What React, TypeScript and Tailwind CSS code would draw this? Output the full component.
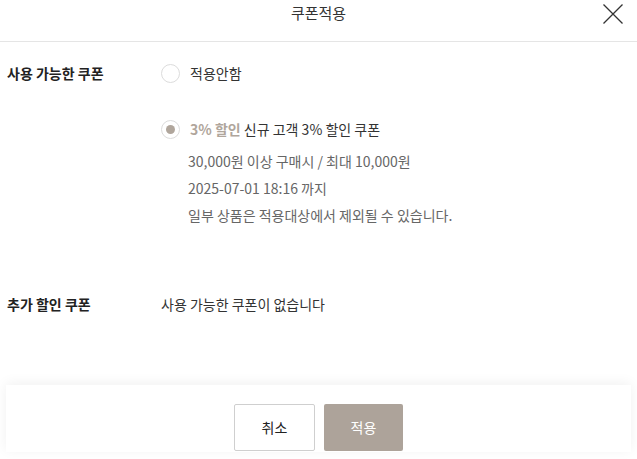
import React from 'react';

const font = { fontFamily: '"Noto Sans CJK KR", "Noto Sans", sans-serif' };

const Radio: React.FC<{ checked?: boolean }> = ({ checked }) => (
  <span className="flex h-[19px] w-[19px] shrink-0 items-center justify-center rounded-full border border-[#dcdcdc] bg-white">
    {checked && <span className="h-[9px] w-[9px] rounded-full bg-[#b0a69c]" />}
  </span>
);

export default function App() {
  return (
    <div className="relative h-[459px] w-[637px] overflow-hidden bg-white text-[#222]" style={font}>
      {/* Header */}
      <div className="relative flex h-[42px] items-start justify-center border-b border-[#e5e5e5]">
        <h1 className="mt-[2px] text-[15px] leading-[22px] text-[#333]">쿠폰적용</h1>
        <button className="absolute right-[13px] top-[3px] h-[22px] w-[22px]">
          <svg viewBox="0 0 22 22" className="h-[22px] w-[22px]" stroke="#333" strokeWidth="1.3" fill="none">
            <path d="M1.5 1.5 L20.5 20.5 M20.5 1.5 L1.5 20.5" />
          </svg>
        </button>
      </div>

      {/* Available coupons */}
      <div className="mt-[21px] flex">
        <div className="w-[161px] pl-[7px] text-[14px] font-bold leading-[20px] text-[#222]">사용 가능한 쿠폰</div>
        <div className="flex flex-col">
          <label className="flex items-center gap-[10px]">
            <Radio />
            <span className="text-[14px] leading-[20px] text-[#333]">적용안함</span>
          </label>
          <div className="mt-[36px] flex flex-col">
            <label className="flex items-center gap-[10px]">
              <Radio checked />
              <span className="text-[14px] leading-[20px] text-[#333]">
                <span className="font-bold text-[#b0a69c]">3% 할인</span> 신규 고객 3% 할인 쿠폰
              </span>
            </label>
            <div className="mt-[12px] flex flex-col gap-[7px] pl-[27px] text-[14px] leading-[20px] text-[#666]">
              <p>30,000원 이상 구매시 / 최대 10,000원</p>
              <p>2025-07-01 18:16 까지</p>
              <p>일부 상품은 적용대상에서 제외될 수 있습니다.</p>
            </div>
          </div>
        </div>
      </div>

      {/* Additional coupons */}
      <div className="mt-[69px] flex">
        <div className="w-[161px] pl-[7px] text-[14px] font-bold leading-[20px] text-[#222]">추가 할인 쿠폰</div>
        <div className="text-[14px] leading-[20px] text-[#333]">사용 가능한 쿠폰이 없습니다</div>
      </div>

      {/* Footer */}
      <div className="absolute bottom-[7px] left-[6px] right-[6px] flex h-[67px] items-end justify-center gap-[9px] bg-white pb-[1px] shadow-[0_-2px_12px_rgba(0,0,0,0.06)]">
        <button className="h-[47px] w-[81px] rounded-[2px] border border-[#cfcfcf] bg-white text-[14px] text-[#222]">취소</button>
        <button className="h-[47px] w-[79px] rounded-[2px] bg-[#ada39a] text-[14px] text-white">적용</button>
      </div>
    </div>
  );
}
